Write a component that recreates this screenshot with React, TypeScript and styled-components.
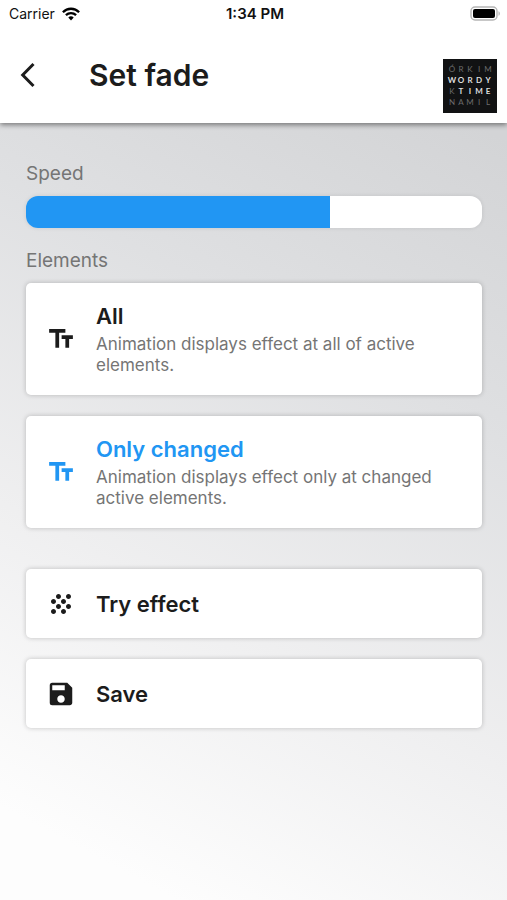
import { useState } from "react";
import styled, { createGlobalStyle } from "styled-components";
import { MdGrain, MdSave, MdTextFields } from "react-icons/md";

const ink = "#1c1c1c";
const muted = "#757575";
const accent = "#2196f3";

const GlobalStyle = createGlobalStyle`
  *, *::before, *::after { box-sizing: border-box; }
  body {
    margin: 0;
    font-family: Inter, "Liberation Sans", sans-serif;
    color: ${ink};
  }
  button, input { font: inherit; color: inherit; }
`;

const Screen = styled.div`
  display: flex;
  flex-direction: column;
  min-height: 100vh;
  background: linear-gradient(208deg, #d3d4d6 12%, #dfe0e2 38%, #efeff0 66%, #fdfdfd 92%);
`;

const Header = styled.header`
  background: #fff;
  box-shadow: 0 2px 5px rgba(0, 0, 0, 0.45);
`;

const StatusBar = styled.div`
  display: grid;
  grid-template-columns: 1fr auto 1fr;
  align-items: center;
  height: 27px;
  padding: 0 6px 0 9px;
  font-size: 14px;
  line-height: 20px;
  color: #111;
`;

const Carrier = styled.span`
  display: flex;
  align-items: center;
  gap: 7px;
`;

const Clock = styled.time`
  font-size: 15px;
  font-weight: 600;
`;

const BatteryIcon = styled.svg`
  justify-self: end;
`;

const TitleBar = styled.div`
  display: flex;
  align-items: center;
  height: 96px;
  padding: 0 10px 0 14px;
`;

const BackButton = styled.button`
  display: flex;
  padding: 4px;
  border: 0;
  background: none;
  cursor: pointer;
`;

const Title = styled.h1`
  flex: 1;
  margin: 0;
  padding-left: 47px;
  font-size: 30px;
  line-height: 36px;
  font-weight: 600;
`;

const Logo = styled.div`
  display: grid;
  grid-template-columns: repeat(5, 9px);
  grid-auto-rows: 11px;
  place-content: center;
  width: 54px;
  height: 54px;
  margin-top: 22px;
  background: #111213;
  font-family: Lato, sans-serif;
  font-size: 8px;
  line-height: 11px;
  text-align: center;
`;

const Letter = styled.span<{ $lit: boolean }>`
  color: ${({ $lit }) => ($lit ? "#dedede" : "#6c6c6c")};
  font-weight: ${({ $lit }) => ($lit ? 700 : 400)};
`;

const Content = styled.main`
  display: flex;
  flex-direction: column;
  padding: 39px 25px 24px 26px;
`;

const FieldLabel = styled.label`
  font-size: 19px;
  line-height: 24px;
  color: ${muted};
`;

const Slider = styled.input`
  appearance: none;
  width: 100%;
  height: 32px;
  margin: 10px 0 21px;
  border-radius: 12px;
  background: linear-gradient(to right, ${accent} var(--fill), #fff var(--fill));
  box-shadow: 0 0 4px rgba(0, 0, 0, 0.1);
  cursor: pointer;

  &::-webkit-slider-thumb {
    appearance: none;
    width: 1px;
    height: 32px;
    background: transparent;
  }
`;

const Group = styled.fieldset`
  display: flex;
  flex-direction: column;
  gap: 21px;
  min-width: 0;
  margin: 0;
  padding: 0;
  border: 0;
`;

const Legend = styled.legend`
  margin-bottom: 10px;
  padding: 0;
  font-size: 19px;
  line-height: 24px;
  color: ${muted};
`;

const HiddenRadio = styled.input`
  position: absolute;
  opacity: 0;
`;

const OptionCard = styled.label<{ $selected: boolean }>`
  position: relative;
  display: flex;
  align-items: center;
  gap: 20px;
  min-height: 112px;
  padding: 16px 20px;
  border-radius: 5px;
  background: #fff;
  box-shadow: 0 0 5px rgba(0, 0, 0, 0.22);
  color: ${({ $selected }) => ($selected ? accent : ink)};
  cursor: pointer;

  svg { flex: none; }
`;

const OptionText = styled.span`
  display: flex;
  flex-direction: column;
  gap: 4px;
`;

const OptionTitle = styled.span`
  font-size: 22px;
  line-height: 28px;
  font-weight: 600;
`;

const OptionNote = styled.span`
  font-size: 17px;
  line-height: 21px;
  color: ${muted};
`;

const Actions = styled.div`
  display: flex;
  flex-direction: column;
  gap: 21px;
  margin-top: 41px;
`;

const ActionButton = styled.button`
  display: flex;
  align-items: center;
  gap: 20px;
  min-height: 69px;
  padding: 0 20px;
  border: 0;
  border-radius: 5px;
  background: #fff;
  box-shadow: 0 0 5px rgba(0, 0, 0, 0.22);
  font-size: 22px;
  line-height: 28px;
  font-weight: 600;
  cursor: pointer;
`;

const options = [
  { id: "all", title: "All", note: "Animation displays effect at all of active elements." },
  { id: "changed", title: "Only changed", note: "Animation displays effect only at changed active elements." },
];

const logoRows = [
  { letters: "ÓRKIM", lit: "00000" },
  { letters: "WORDY", lit: "11111" },
  { letters: "KTIME", lit: "01111" },
  { letters: "NAMIL", lit: "00000" },
];

function WifiIcon() {
  return (
    <svg width="18" height="14" viewBox="0 0 18 14" fill="none" stroke="#000" strokeWidth="2.3" aria-hidden="true">
      <path d="M.9 5.2C5.4.6 12.6.6 17.1 5.2" />
      <path d="M3.9 8.2c2.9-2.8 7.3-2.8 10.2 0" />
      <path d="M6.3 10.4c1.6-1.5 3.8-1.5 5.4 0L9 13.4z" fill="#000" stroke="none" />
    </svg>
  );
}

export default function App() {
  const [speed, setSpeed] = useState(200);
  const [selected, setSelected] = useState("changed");

  return (
    <>
      <GlobalStyle />
      <Screen>
        <Header>
          <StatusBar>
            <Carrier>
              Carrier
              <WifiIcon />
            </Carrier>
            <Clock>1:34 PM</Clock>
            <BatteryIcon width="31" height="15" viewBox="0 0 31 15" role="img" aria-label="Battery full">
              <rect x="1" y="1" width="26" height="13" rx="4" fill="#fff" stroke="#b5b5b5" strokeWidth="1.4" />
              <rect x="3" y="3" width="22" height="9" rx="2" fill="#000" />
              <path d="M28.5 5.2c1.8.7 1.8 3.9 0 4.6z" fill="#b5b5b5" />
            </BatteryIcon>
          </StatusBar>
          <TitleBar>
            <BackButton type="button" aria-label="Back">
              <svg width="20" height="28" viewBox="0 0 20 28" fill="none" stroke={ink} strokeWidth="3">
                <path d="M15.5 3 4.7 14l10.8 11" />
              </svg>
            </BackButton>
            <Title>Set fade</Title>
            <Logo>
              {logoRows.map((row) =>
                row.letters.split("").map((letter, i) => (
                  <Letter key={row.letters + i} $lit={row.lit[i] === "1"}>
                    {letter}
                  </Letter>
                )),
              )}
            </Logo>
          </TitleBar>
        </Header>
        <Content>
          <FieldLabel htmlFor="speed">Speed</FieldLabel>
          <Slider
            id="speed"
            type="range"
            min={0}
            max={300}
            value={speed}
            onChange={(e) => setSpeed(Number(e.target.value))}
            style={{ "--fill": `${speed / 3}%` } as React.CSSProperties}
          />
          <Group>
            <Legend>Elements</Legend>
            {options.map((option) => (
              <OptionCard key={option.id} $selected={selected === option.id}>
                <HiddenRadio
                  type="radio"
                  name="elements"
                  checked={selected === option.id}
                  onChange={() => setSelected(option.id)}
                />
                <MdTextFields size={30} />
                <OptionText>
                  <OptionTitle>{option.title}</OptionTitle>
                  <OptionNote>{option.note}</OptionNote>
                </OptionText>
              </OptionCard>
            ))}
          </Group>
          <Actions>
            <ActionButton type="button">
              <MdGrain size={30} />
              Try effect
            </ActionButton>
            <ActionButton type="button">
              <MdSave size={30} />
              Save
            </ActionButton>
          </Actions>
        </Content>
      </Screen>
    </>
  );
}
